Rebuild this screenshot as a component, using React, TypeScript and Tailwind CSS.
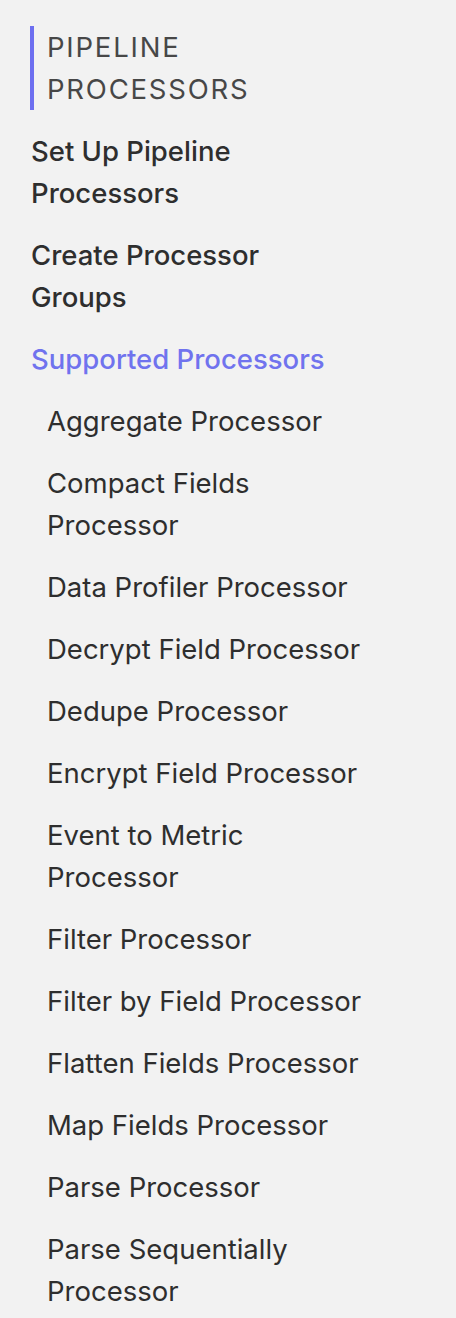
import React from "react";

const subItems = [
  "Aggregate Processor",
  "Compact Fields Processor",
  "Data Profiler Processor",
  "Decrypt Field Processor",
  "Dedupe Processor",
  "Encrypt Field Processor",
  "Event to Metric Processor",
  "Filter Processor",
  "Filter by Field Processor",
  "Flatten Fields Processor",
  "Map Fields Processor",
  "Parse Processor",
  "Parse Sequentially Processor",
];

export default function App() {
  return (
    <div className="min-h-[1318px] w-[456px] bg-[#f2f2f2] pt-[26px] pl-[30px] font-['Inter',sans-serif] text-[27.5px] leading-[42px] text-[#2e2e2e]">
      <div className="border-l-4 border-[#6d6ff0] pl-[13px] w-[300px] uppercase tracking-[0.065em] text-[#474747]">
        Pipeline Processors
      </div>
      <ul className="mt-[20px] flex flex-col gap-[20px] pl-px">
        <li className="w-[300px] font-medium">
          <a href="#">Set Up Pipeline Processors</a>
        </li>
        <li className="w-[300px] font-medium">
          <a href="#">Create Processor Groups</a>
        </li>
        <li className="font-medium text-[#7073ee]">
          <a href="#">Supported Processors</a>
        </li>
        <li>
          <ul className="flex flex-col gap-[20px] pl-[16px]">
            {subItems.map((s) => (
              <li key={s} className="w-[322px]">
                <a href="#">{s}</a>
              </li>
            ))}
          </ul>
        </li>
      </ul>
    </div>
  );
}
